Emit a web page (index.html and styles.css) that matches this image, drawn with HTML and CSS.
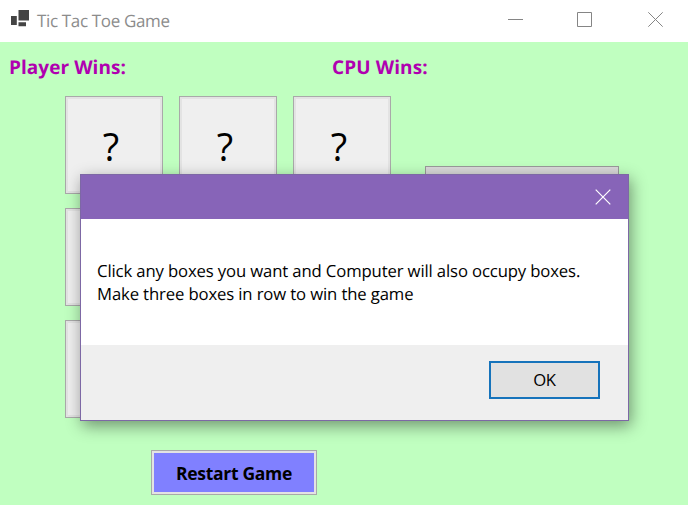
FILE: index.html
```html
<!DOCTYPE html>
<html lang="en">
<head>
<meta charset="utf-8">
<title>Tic Tac Toe Game</title>
<link rel="stylesheet" href="styles.css">
</head>
<body>
<div class="window">
  <header class="titlebar">
    <svg class="app-icon" width="20" height="18" viewBox="0 0 20 18">
      <path fill="#444" d="M8.5 0H19V10.5H8.500zM1 6H6.800V15H1zM8.500 12.300H16V16.300H8.500z"/>
    </svg>
    <span class="title">Tic Tac Toe Game</span>
    <svg class="controls" width="158" height="16" viewBox="0 0 158 16" fill="none" stroke="#858585">
      <path d="M1 8.500H16M70.500 1.500H84.500V15.500H70.500zM141.300 1.300L155.700 15.700M155.700 1.300L141.300 15.700"/>
    </svg>
  </header>
  <main class="client">
    <div class="scores">
      <span class="score player">Player Wins:</span>
      <span class="score cpu">CPU Wins:</span>
    </div>
    <div class="play">
      <div class="board">
        <button class="cell">?</button><button class="cell">?</button><button class="cell">?</button>
        <button class="cell"></button><button class="cell"></button><button class="cell"></button>
        <button class="cell"></button><button class="cell"></button><button class="cell"></button>
      </div>
      <div class="side"></div>
    </div>
    <button class="restart">Restart Game</button>
  </main>
  <section class="dialog" role="dialog">
    <div class="dialog-bar">
      <svg width="16" height="16" viewBox="0 0 16 16" fill="none" stroke="#fff" stroke-width="1.2"><path d="M.7.7L15.300 15.300M15.300.7L.7 15.300"/></svg>
    </div>
    <div class="message">
      <div>Click any boxes you want and Computer will also occupy boxes.</div>
      <div>Make three boxes in row to win the game</div>
    </div>
    <div class="actions"><button class="ok">OK</button></div>
  </section>
</div>
</body>
</html>
```
FILE: styles.css
```css
* { box-sizing: border-box; }
body {
  margin: 0;
  font-family: "Open Sans", "Noto Sans", sans-serif;
  text-rendering: geometricPrecision;
}
button { font-family: inherit; color: #000; padding: 0; }
.window {
  position: relative;
  width: 688px;
  height: 505px;
  overflow: hidden;
  background: #c0ffc0;
}
.titlebar {
  display: flex;
  height: 42px;
  padding: 0 23px 0 10px;
  background: #fff;
}
.app-icon { margin-top: 10px; }
.title {
  margin-left: 7px;
  flex: 1;
  font-size: 17px;
  line-height: 41px;
  letter-spacing: -0.35px;
  color: #8c8c8c;
  white-space: nowrap;
}
.controls { margin-top: 11px; }
.scores {
  display: flex;
  height: 54px;
  padding: 11px 9px 0;
  font-size: 19px;
  font-weight: 700;
  line-height: 28px;
  color: #b000b0;
  white-space: nowrap;
}
.score.player { width: 323px; letter-spacing: 0.05px; }
.score.cpu { letter-spacing: 0.1px; }
.play {
  display: flex;
  padding-left: 65px;
}
.board {
  display: grid;
  grid-template-columns: repeat(3, 98px);
  grid-template-rows: repeat(3, 98px);
  gap: 14px 16px;
}
.cell {
  border: 1px solid #a9a9a9;
  background: #efefef;
  box-shadow: inset 0 0 0 2px #e3e3e3;
  font-size: 38px;
  line-height: 90px;
  padding: 2px 6px 0 0;
}
.side {
  width: 194px;
  height: 120px;
  margin: 70px 0 0 34px;
  border: 1px solid #999;
  background: #d9d9d9;
}
.restart {
  display: block;
  width: 166px;
  height: 45px;
  margin: 32px 0 0 151px;
  border: 1px solid #a9a9a9;
  background: #8080ff;
  box-shadow: inset 0 0 0 2px #e3e3e3;
  font-size: 17.5px;
  font-weight: 700;
  letter-spacing: -0.3px;
}
.dialog {
  position: absolute;
  left: 80px;
  top: 174px;
  width: 549px;
  height: 247px;
  border: 1px solid #7d68a5;
  background: #fff;
  box-shadow: 2px 5px 15px rgba(0, 0, 0, 0.42);
}
.dialog-bar {
  display: flex;
  justify-content: flex-end;
  height: 44px;
  padding: 14px 17px 0 0;
  background: #8764b8;
}
.message {
  height: 126px;
  padding: 40px 16px 0;
  font-size: 16.7px;
  line-height: 23px;
  letter-spacing: -0.13px;
  white-space: nowrap;
}
.actions {
  display: flex;
  justify-content: flex-end;
  height: 75px;
  padding: 16px 28px 0 0;
  background: #efefef;
}
.ok {
  width: 111px;
  height: 38px;
  padding-bottom: 2px;
  border: 2px solid #1673bb;
  background: #e1e1e1;
  font-size: 16.7px;
  letter-spacing: -0.3px;
}
```
